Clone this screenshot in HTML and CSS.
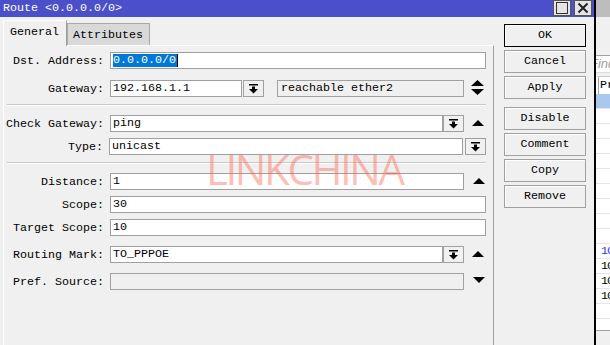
FILE: index.html
```html
<!DOCTYPE html>
<html>
<head>
<meta charset="utf-8">
<link rel="stylesheet" href="styles.css">
</head>
<body>
<div class="screen">
  <div class="dialog">
    <div class="titlebar">
      <span class="title">Route &lt;0.0.0.0/0&gt;</span>
      <div class="tbtns">
        <span class="tbtn"><svg width="12" height="12" viewBox="0 0 12 12"><rect x="0.5" y="0.5" width="11" height="11" fill="none" stroke="#333"/></svg></span>
        <span class="tbtn"><svg width="12" height="12" viewBox="0 0 12 12"><path d="M1.5 1.5L10.5 10.5M10.5 1.5L1.5 10.5" stroke="#222" stroke-width="2"/></svg></span>
      </div>
    </div>
    <div class="main">
      <div class="left">
        <div class="tabs">
          <div class="tab active">General</div>
          <div class="tab">Attributes</div>
        </div>
        <div class="panel">
          <div class="row r-dst">
            <span class="lbl">Dst. Address:</span>
            <div class="inp w-full"><span class="sel">0.0.0.0/0</span></div>
          </div>
          <div class="row r-gw">
            <span class="lbl">Gateway:</span>
            <div class="inp w-gw">192.168.1.1</div>
            <span class="dd dd-gw"><svg width="9" height="10" viewBox="0 0 9 10"><rect x="0" y="0" width="9" height="1.5" fill="#000"/><rect x="3" y="2.5" width="3" height="3" fill="#000"/><polygon points="0,5 9,5 4.5,9.5" fill="#000"/></svg></span>
            <div class="inp ro w-ro">reachable ether2</div>
            <span class="arr updown"><svg width="13" height="15" viewBox="0 0 13 15"><polygon points="0,6 13,6 6.5,0" fill="#000"/><polygon points="0,9 13,9 6.5,15" fill="#000"/></svg></span>
          </div>
          <div class="sep s1"></div>
          <div class="row r-cg">
            <span class="lbl">Check Gateway:</span>
            <div class="inp w-dd">ping</div>
            <span class="dd"><svg width="9" height="10" viewBox="0 0 9 10"><rect x="0" y="0" width="9" height="1.5" fill="#000"/><rect x="3" y="2.5" width="3" height="3" fill="#000"/><polygon points="0,5 9,5 4.5,9.5" fill="#000"/></svg></span>
            <span class="arr up"><svg width="12" height="6" viewBox="0 0 12 6"><polygon points="0,6 12,6 6,0" fill="#000"/></svg></span>
          </div>
          <div class="row r-type">
            <span class="lbl">Type:</span>
            <div class="inp w-arr">unicast</div>
            <span class="dd dd-type"><svg width="9" height="10" viewBox="0 0 9 10"><rect x="0" y="0" width="9" height="1.5" fill="#000"/><rect x="3" y="2.5" width="3" height="3" fill="#000"/><polygon points="0,5 9,5 4.5,9.5" fill="#000"/></svg></span>
          </div>
          <div class="sep s2"></div>
          <div class="row r-dist">
            <span class="lbl">Distance:</span>
            <div class="inp w-arr">1</div>
            <span class="arr up up-solo"><svg width="12" height="6" viewBox="0 0 12 6"><polygon points="0,6 12,6 6,0" fill="#000"/></svg></span>
          </div>
          <div class="row r-scope">
            <span class="lbl">Scope:</span>
            <div class="inp w-full">30</div>
          </div>
          <div class="row r-tscope">
            <span class="lbl">Target Scope:</span>
            <div class="inp w-full">10</div>
          </div>
          <div class="row r-rm">
            <span class="lbl">Routing Mark:</span>
            <div class="inp w-dd">TO_PPPOE</div>
            <span class="dd"><svg width="9" height="10" viewBox="0 0 9 10"><rect x="0" y="0" width="9" height="1.5" fill="#000"/><rect x="3" y="2.5" width="3" height="3" fill="#000"/><polygon points="0,5 9,5 4.5,9.5" fill="#000"/></svg></span>
            <span class="arr up"><svg width="12" height="6" viewBox="0 0 12 6"><polygon points="0,6 12,6 6,0" fill="#000"/></svg></span>
          </div>
          <div class="row r-pref">
            <span class="lbl">Pref. Source:</span>
            <div class="inp ro w-arr"></div>
            <span class="arr down up-solo"><svg width="12" height="6" viewBox="0 0 12 6"><polygon points="0,0 12,0 6,6" fill="#000"/></svg></span>
          </div>
        </div>
      </div>
      <div class="buttons">
        <div class="btn default">OK</div>
        <div class="btn">Cancel</div>
        <div class="btn">Apply</div>
        <div class="btn gap">Disable</div>
        <div class="btn">Comment</div>
        <div class="btn">Copy</div>
        <div class="btn">Remove</div>
      </div>
    </div>
    <div class="watermark">LINKCHINA</div>
  </div>
  <div class="bgwin">
    <div class="bg-title"></div>
    <div class="bg-tool"></div>
    <div class="bg-find"><span>Find</span></div>
    <div class="bg-gap"></div>
    <div class="bg-head">Pr</div>
    <div class="bg-rows">
      <div class="bg-row selrow"></div>
      <div class="bg-row"></div>
      <div class="bg-row"></div>
      <div class="bg-row"></div>
      <div class="bg-row"></div>
      <div class="bg-row"></div>
      <div class="bg-row"></div>
      <div class="bg-row"></div>
      <div class="bg-row"></div>
      <div class="bg-row"></div>
      <div class="bg-row blue">10</div>
      <div class="bg-row">10</div>
      <div class="bg-row">10</div>
      <div class="bg-row">10</div>
      <div class="bg-row"></div>
      <div class="bg-row last"></div>
    </div>
    <div class="bg-bottom"></div>
  </div>
</div>
</body>
</html>
```

FILE: styles.css
```css
* { box-sizing: border-box; }

body {
  margin: 0;
  font-family: "Liberation Mono", "DejaVu Sans Mono", monospace;
  font-size: 11.67px;
  color: #000;
  background: #f0f0f0;
}

.screen {
  display: flex;
  width: 610px;
  height: 345px;
  overflow: hidden;
}

.dialog {
  position: relative;
  flex: none;
  width: 596px;
  height: 345px;
  background: #f0f0f0;
  border-right: 2px solid #000;
  display: flex;
  flex-direction: column;
}

.titlebar {
  flex: none;
  height: 17px;
  background: #4b4fc9;
  display: flex;
  justify-content: space-between;
  align-items: flex-start;
}

.title {
  color: #fff;
  line-height: 17px;
  padding-left: 3px;
  white-space: pre;
}

.tbtns {
  display: flex;
  gap: 3px;
  padding-right: 2px;
}

.tbtn {
  width: 18px;
  height: 16px;
  background: #e4e4e4;
  border: 1px solid #555;
  display: flex;
  align-items: center;
  justify-content: center;
}

.main {
  flex: 1;
  display: flex;
}

.left {
  width: 494px;
  padding: 3px 0 0 3px;
  display: flex;
  flex-direction: column;
}

.tabs {
  display: flex;
  align-items: flex-end;
  height: 25px;
  position: relative;
  z-index: 1;
}

.tab {
  height: 22px;
  width: 83px;
  background: #d9d9d9;
  border: 1px solid #a9a9a9;
  border-bottom: none;
  padding-left: 5px;
  line-height: 22px;
  white-space: pre;
}

.tab.active {
  width: 64px;
  height: 26px;
  margin-bottom: -1px;
  background: #f0f0f0;
  border-color: #fff #a0a0a0 #f0f0f0 #fff;
  padding-left: 6px;
  line-height: 23px;
}

.panel {
  flex: 1;
  width: 491px;
  border-top: 1px solid #fff;
  border-left: 1px solid #fff;
  border-right: 1px solid #a0a0a0;
  padding: 6px 7px 0 0;
}

.row {
  display: flex;
  align-items: center;
  height: 17px;
}

.r-gw { margin-top: 11px; }
.r-cg { margin-top: 9px; }
.r-type { margin-top: 6px; }
.r-dist { margin-top: 9px; }
.r-scope { margin-top: 6px; }
.r-tscope { margin-top: 6px; }
.r-rm { margin-top: 10px; }
.r-pref { margin-top: 10px; }

.lbl {
  width: 100px;
  margin-right: 6px;
  text-align: right;
  white-space: pre;
}

.inp {
  flex: none;
  height: 17px;
  border: 1px solid #a0a0a0;
  background: #fff;
  padding-left: 2px;
  line-height: 15px;
  white-space: pre;
  overflow: hidden;
}

.inp.ro { background: #f0f0f0; }

.w-full { width: 376px; }
.w-arr { width: 354px; }
.w-dd { width: 333px; }
.w-gw { width: 132px; }
.w-ro { width: 187px; margin-left: 13px; padding-left: 3px; }

.sel {
  background: #0078d7;
  color: #fff;
  display: inline-block;
  line-height: 13px;
  padding-right: 1px;
  border-right: 1px solid #000;
}

.dd {
  flex: none;
  width: 21px;
  height: 17px;
  border: 1px solid #a0a0a0;
  background: #f0f0f0;
  display: flex;
  align-items: center;
  justify-content: center;
  padding-top: 1px;
}

.dd-gw { margin-left: 1px; }
.dd-type { margin-left: 2px; }

.arr {
  flex: none;
  display: flex;
  margin-left: 8px;
}

.arr.up { margin-top: -2px; }
.arr.up-solo { margin-left: 9px; }
.arr.down { margin-top: -4px; }
.arr.updown { margin-left: 7px; margin-top: -3px; }

.sep {
  height: 2px;
  margin-left: 3px;
  width: 479px;
  border-top: 1px solid #c8c8c8;
  border-bottom: 1px solid #fff;
}

.s1 { margin-top: 7px; }
.s2 { margin-top: 7px; }

.buttons {
  width: 100px;
  padding: 7px 0 0 10px;
  display: flex;
  flex-direction: column;
  gap: 3px;
}

.btn {
  width: 82px;
  height: 23px;
  border: 1px solid #a0a0a0;
  background: #f0f0f0;
  box-shadow: inset 1px 1px 0 #fff;
  text-align: center;
  line-height: 21px;
  white-space: pre;
}

.btn.default { border-color: #000; }
.btn.gap { margin-top: 5px; }

.watermark {
  position: absolute;
  left: 206px;
  top: 148px;
  font-family: "Open Sans", "Noto Sans", sans-serif;
  font-weight: 400;
  font-size: 42px;
  line-height: 42px;
  letter-spacing: -2.4px;
  color: rgba(255, 95, 75, 0.42);
  white-space: pre;
  pointer-events: none;
}

.bgwin {
  flex: none;
  width: 14px;
  height: 345px;
  overflow: hidden;
  background: #f0f0f0;
  display: flex;
  flex-direction: column;
}

.bg-title { height: 17px; background: #bdbdbd; flex: none; }
.bg-tool { height: 38px; flex: none; background: #f0f0f0; }

.bg-find {
  flex: none;
  height: 18px;
  background: #fff;
  border-top: 1px solid #a0a0a0;
  border-bottom: 1px solid #dcdcdc;
  font-family: "Liberation Sans", Arial, sans-serif;
  font-style: italic;
  font-size: 13px;
  line-height: 15px;
  color: #a0a0a0;
  white-space: pre;
}

.bg-find span { display: inline-block; margin-left: -6px; }

.bg-gap { height: 3px; flex: none; }

.bg-head {
  flex: none;
  height: 18px;
  background: #fff;
  border-top: 1px solid #c8c8c8;
  border-left: 2px solid #fff;
  padding-left: 2px;
  box-shadow: inset 1px 0 0 #a0a0a0;
  line-height: 17px;
  white-space: pre;
}

.bg-rows { flex: none; background: #fff; }

.bg-row {
  height: 15px;
  border-bottom: 1px solid #e6e6e6;
  padding-left: 5px;
  line-height: 14px;
  white-space: pre;
  letter-spacing: -1px;
}

.bg-row.selrow { background: #a9c8ef; }
.bg-row.blue { color: #3030ff; }
.bg-row.last { height: 12px; border-bottom: 1px solid #a0a0a0; }

.bg-bottom { flex: 1; background: #f0f0f0; }
```
